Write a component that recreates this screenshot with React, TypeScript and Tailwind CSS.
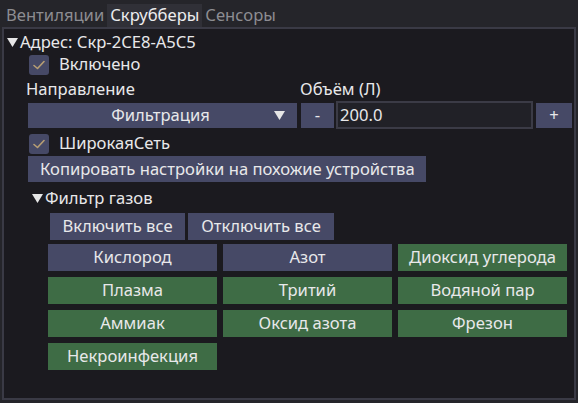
import React from 'react';

const font = { fontFamily: '"Noto Sans", "DejaVu Sans", sans-serif' };

const Tri = ({ className = '' }: { className?: string }) => (
    <svg width="11" height="9" viewBox="0 0 11 9" className={className}>
        <path d="M0 0 H11 L5.5 9 Z" fill="#e6e6e6" />
    </svg>
);

const Check = ({ label }: { label: string }) => (
    <div className="flex items-center h-[21px] pl-[25px] gap-[10px]">
        <div className="w-[20px] h-[20px] rounded-[3px] bg-[#464966] flex items-center justify-center">
            <svg width="12" height="10" viewBox="0 0 12 10">
                <path d="M1 5.5 L4.5 8.5 L11 1.5" stroke="#b79e74" strokeWidth="1.6" fill="none" strokeLinecap="round" strokeLinejoin="round" />
            </svg>
        </div>
        <span>{label}</span>
    </div>
);

const gases: { name: string; on: boolean }[] = [
    { name: 'Кислород', on: false },
    { name: 'Азот', on: false },
    { name: 'Диоксид углерода', on: true },
    { name: 'Плазма', on: true },
    { name: 'Тритий', on: true },
    { name: 'Водяной пар', on: true },
    { name: 'Аммиак', on: true },
    { name: 'Оксид азота', on: true },
    { name: 'Фрезон', on: true },
    { name: 'Некроинфекция', on: true },
];

export default function App() {
    return (
        <div className="w-[578px] h-[403px] bg-[#25252a] text-[#e8e8ea] text-[16.6px] leading-none overflow-hidden" style={font}>
            {/* tabs */}
            <div className="flex h-[27px] pt-[4px] pl-[3px]">
                <div className="px-[3px] flex items-center text-[#8d8d92]">Вентиляции</div>
                <div className="px-[3px] flex items-center bg-[#303037] text-[#ececee]">Скрубберы</div>
                <div className="px-[3px] flex items-center text-[#8d8d92]">Сенсоры</div>
            </div>

            {/* panel */}
            <div className="mx-[2px] h-[373px] border-2 border-[#3a3a45] bg-[#1b1a1f] pt-[2px]">
                <div className="flex items-center h-[23px] pl-[3px] gap-[2px]">
                    <Tri />
                    <span>Адрес: Скр-2CE8-A5C5</span>
                </div>
                <Check label="Включено" />

                <div className="flex h-[20px] mt-[4px] items-center">
                    <span className="pl-[22px] w-[294px]">Направление</span>
                    <span className="pl-[2px]">Объём (Л)</span>
                </div>

                <div className="flex items-center h-[28px] mt-[2px] pl-[24px]">
                    <div className="w-[269px] h-[25px] bg-[#464966] flex items-center relative">
                        <span className="flex-1 text-center pr-[4px]">Фильтрация</span>
                        <Tri className="absolute right-[12px] top-[8px]" />
                    </div>
                    <div className="ml-[4px] w-[33px] h-[25px] bg-[#464966] flex items-center justify-center">-</div>
                    <div className="ml-[2px] w-[197px] h-[28px] bg-[#212127] border-2 border-[#3b3b46] flex items-center pl-[2px]">200.0</div>
                    <div className="ml-[3px] w-[36px] h-[25px] bg-[#464966] flex items-center justify-center">+</div>
                </div>

                <div className="mt-[4px]">
                    <Check label="ШирокаяСеть" />
                </div>

                <div className="mt-[2px] ml-[24px] w-[398px] h-[26px] bg-[#464966] flex items-center pl-[12px]">
                    Копировать настройки на похожие устройства
                </div>

                <div className="flex items-center h-[20px] mt-[6px] pl-[28px] gap-[2px]">
                    <Tri />
                    <span>Фильтр газов</span>
                </div>

                <div className="flex gap-[3px] mt-[5px] ml-[46px] h-[27px]">
                    <div className="w-[135px] bg-[#464966] flex items-center justify-center">Включить все</div>
                    <div className="w-[146px] bg-[#464966] flex items-center justify-center">Отключить все</div>
                </div>

                <div className="grid grid-cols-[169px_169px_169px] gap-x-[6px] gap-y-[6px] mt-[4px] ml-[44px]">
                    {gases.map((g) => (
                        <div
                            key={g.name}
                            className={`h-[27px] flex items-center justify-center ${g.on ? 'bg-[#3e6c45]' : 'bg-[#464966]'}`}
                        >
                            {g.name}
                        </div>
                    ))}
                </div>
            </div>
        </div>
    );
}
